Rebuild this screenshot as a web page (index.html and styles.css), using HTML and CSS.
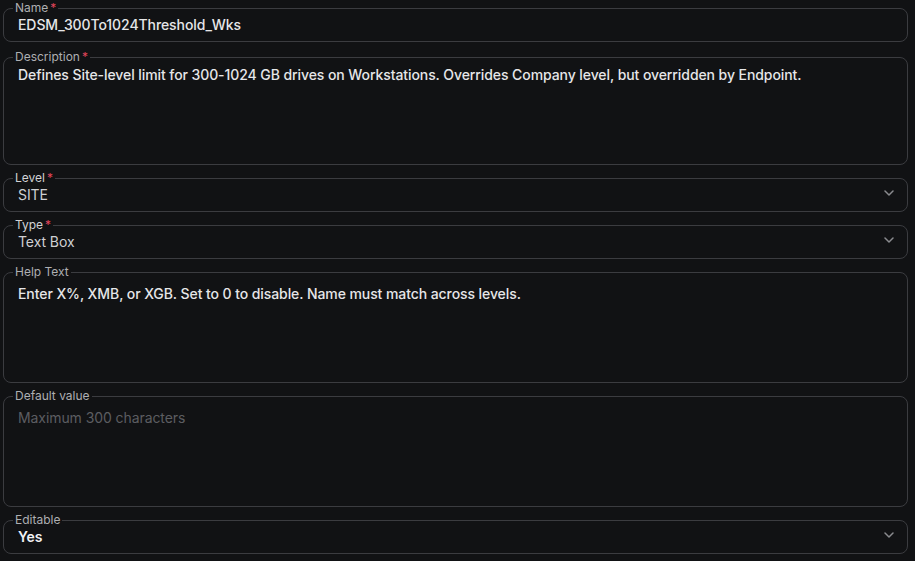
FILE: index.html
```html
<!DOCTYPE html>
<html lang="en">
<head>
    <meta charset="UTF-8">
    <meta name="viewport" content="width=device-width, initial-scale=1.0">
    <title>Edit Variable</title>
    <link rel="stylesheet" href="styles.css">
</head>
<body>
    <form class="form">
        <fieldset class="field field-name">
            <legend>Name<span class="req">*</span></legend>
            <div class="value">EDSM_300To1024Threshold_Wks</div>
        </fieldset>

        <fieldset class="field field-desc">
            <legend>Description<span class="req">*</span></legend>
            <div class="value">Defines Site-level limit for 300-1024 GB drives on Workstations. Overrides Company level, but overridden by Endpoint.</div>
        </fieldset>

        <fieldset class="field field-select">
            <legend class="legend-light">Level<span class="req">*</span></legend>
            <div class="value value-dim">SITE</div>
            <svg class="chevron" viewBox="0 0 10 6" width="10" height="6"><path d="M1 1l4 4 4-4"/></svg>
        </fieldset>

        <fieldset class="field field-select">
            <legend class="legend-light">Type<span class="req">*</span></legend>
            <div class="value value-dim">Text Box</div>
            <svg class="chevron" viewBox="0 0 10 6" width="10" height="6"><path d="M1 1l4 4 4-4"/></svg>
        </fieldset>

        <fieldset class="field field-area">
            <legend>Help Text</legend>
            <div class="value">Enter X%, XMB, or XGB. Set to 0 to disable. Name must match across levels.</div>
        </fieldset>

        <fieldset class="field field-area">
            <legend>Default value</legend>
            <div class="value placeholder">Maximum 300 characters</div>
        </fieldset>

        <fieldset class="field field-select">
            <legend>Editable</legend>
            <div class="value value-bold">Yes</div>
            <svg class="chevron" viewBox="0 0 10 6" width="10" height="6"><path d="M1 1l4 4 4-4"/></svg>
        </fieldset>
    </form>
</body>
</html>
```

FILE: styles.css
```css
html, body {
    background: #111214;
}

body {
    margin: 0;
    padding: 1px 7px 0 3px;
    font-family: Inter, "Noto Sans", sans-serif;
    color: #e4e4e6;
}

.form {
    display: flex;
    flex-direction: column;
    gap: 6px;
}

.field {
    position: relative;
    margin: 0;
    padding: 0 14px 6px;
    border: 1px solid #3b3c40;
    border-radius: 8px;
    min-width: 0;
}

.field-name {
    margin-bottom: 2px;
}

.field legend {
    padding: 0 2px;
    margin-left: -5px;
    font-size: 12px;
    line-height: 14px;
    color: #aeafb2;
}

.field .legend-light {
    color: #d2d3d6;
}

.req {
    color: #e0455a;
    margin-left: 2px;
}

.value {
    font-size: 14px;
    line-height: 20px;
    font-weight: 500;
    letter-spacing: -0.08px;
    color: #e6e6e8;
}

.value-dim {
    font-weight: 400;
    color: #cfd0d3;
}

.value-bold {
    font-weight: 600;
    color: #f2f2f4;
}

.placeholder {
    font-weight: 400;
    color: #5c5d61;
}

.field-desc .value {
    padding-top: 1px;
    min-height: 93px;
}

.field-area .value {
    padding-top: 5px;
    min-height: 92px;
}

.chevron {
    position: absolute;
    right: 13px;
    top: 5px;
    fill: none;
    stroke: #8a8b8f;
    stroke-width: 1.5;
    stroke-linecap: round;
    stroke-linejoin: round;
}
```
